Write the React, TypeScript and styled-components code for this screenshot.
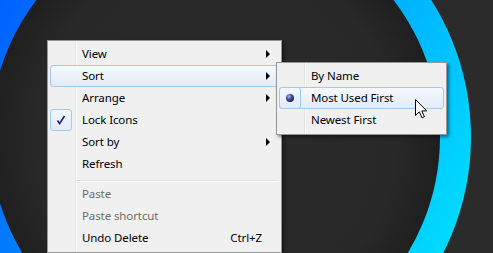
import styled, { createGlobalStyle } from "styled-components";

const GlobalStyle = createGlobalStyle`
  html, body {
    margin: 0;
    padding: 0;
    background: #2b2b2b;
  }
`;

type Entry =
  | { kind: "item"; label: string; arrow?: boolean; shortcut?: string; disabled?: boolean; active?: boolean; mark?: "check" | "radio" }
  | { kind: "sep" };

const mainEntries: Entry[] = [
  { kind: "item", label: "View", arrow: true },
  { kind: "item", label: "Sort", arrow: true, active: true },
  { kind: "item", label: "Arrange", arrow: true },
  { kind: "item", label: "Lock Icons", mark: "check" },
  { kind: "item", label: "Sort by", arrow: true },
  { kind: "item", label: "Refresh" },
  { kind: "sep" },
  { kind: "item", label: "Paste", disabled: true },
  { kind: "item", label: "Paste shortcut", disabled: true },
  { kind: "item", label: "Undo Delete", shortcut: "Ctrl+Z" },
];

const subEntries: Entry[] = [
  { kind: "item", label: "By Name" },
  { kind: "item", label: "Most Used First", active: true, mark: "radio" },
  { kind: "item", label: "Newest First" },
];

const Wallpaper = () => (
  <WallSvg width="493" height="253" viewBox="0 0 493 253">
    <defs>
      <linearGradient id="ring" gradientUnits="userSpaceOnUse" x1="0" y1="0" x2="493" y2="253">
        <stop offset="0" stopColor="#0062ff" />
        <stop offset="0.5" stopColor="#009cff" />
        <stop offset="1" stopColor="#00e6ff" />
      </linearGradient>
      <radialGradient id="hole" cx="215" cy="137" r="226" gradientUnits="userSpaceOnUse">
        <stop offset="0" stopColor="#2a2a2a" />
        <stop offset="0.8" stopColor="#282828" />
        <stop offset="1" stopColor="#1f1f1f" />
      </radialGradient>
    </defs>
    <circle cx="215" cy="137" r="256" fill="url(#ring)" />
    <circle cx="215" cy="137" r="225" fill="url(#hole)" />
  </WallSvg>
);

const Mark = ({ type }: { type: "check" | "radio" }) =>
  type === "check" ? (
    <svg width="20" height="20" viewBox="0 0 20 20">
      <path d="M6.5 10.5 L8.6 13.6 L13.5 6" fill="none" stroke="#1c1c80" strokeWidth="1.6" />
    </svg>
  ) : (
    <svg width="20" height="20" viewBox="0 0 20 20">
      <defs>
        <radialGradient id="dot" cx="0.38" cy="0.32" r="0.7">
          <stop offset="0" stopColor="#b9bdf0" />
          <stop offset="0.45" stopColor="#4d51a8" />
          <stop offset="1" stopColor="#1e1f5c" />
        </radialGradient>
      </defs>
      <circle cx="10" cy="10" r="4" fill="url(#dot)" />
    </svg>
  );

const MenuList = ({ entries }: { entries: Entry[] }) => (
  <>
    {entries.map((e, i) =>
      e.kind === "sep" ? (
        <Separator key={i} />
      ) : (
        <Item key={i} $active={!!e.active} $disabled={!!e.disabled}>
          <IconCell $boxed={!!e.mark}>{e.mark && <Mark type={e.mark} />}</IconCell>
          <Label>{e.label}</Label>
          {e.shortcut && <Shortcut>{e.shortcut}</Shortcut>}
          <ArrowCell>{e.arrow && <Arrow />}</ArrowCell>
        </Item>
      )
    )}
  </>
);

export default function App() {
  return (
    <>
      <GlobalStyle />
      <Desktop>
        <Wallpaper />
        <Menu $left={47} $top={40} $width={235}>
          <MenuList entries={mainEntries} />
        </Menu>
        <Menu $left={276} $top={62} $width={171}>
          <MenuList entries={subEntries} />
        </Menu>
        <Cursor width="13" height="20" viewBox="0 0 13 20">
          <path
            d="M0.5 0.5 L0.5 16.5 L4.3 12.8 L7 18.8 L9.4 17.8 L6.8 11.9 L11.7 11.9 Z"
            fill="#fff"
            stroke="#000"
            strokeWidth="1"
            strokeLinejoin="miter"
          />
        </Cursor>
      </Desktop>
    </>
  );
}

const Desktop = styled.div`
  position: relative;
  width: 493px;
  height: 253px;
  overflow: hidden;
  background: #2b2b2b;
  font-family: "Segoe UI", "Noto Sans", "Open Sans", sans-serif;
  font-size: 11.5px;
  letter-spacing: -0.1px;
  color: #000;
`;

const WallSvg = styled.svg`
  position: absolute;
  inset: 0;
  display: block;
`;

const Menu = styled.div<{ $left: number; $top: number; $width: number }>`
  position: absolute;
  left: ${(p) => p.$left}px;
  top: ${(p) => p.$top}px;
  width: ${(p) => p.$width}px;
  box-sizing: border-box;
  padding: 2px 2px 3px;
  border: 1px solid #979797;
  background:
    linear-gradient(
      to right,
      transparent 27px,
      #e2e3e3 27px,
      #e2e3e3 28px,
      #ffffff 28px,
      #ffffff 29px,
      transparent 29px
    ),
    #f0f0f0;
  box-shadow: 2px 2px 3px rgba(0, 0, 0, 0.45);
  display: flex;
  flex-direction: column;
`;

const Item = styled.div<{ $active: boolean; $disabled: boolean }>`
  height: 22px;
  box-sizing: border-box;
  display: flex;
  align-items: center;
  border: 1px solid ${(p) => (p.$active ? "#a8c8f0" : "transparent")};
  border-radius: 3px;
  background: ${(p) =>
    p.$active ? "linear-gradient(to bottom, #f6f9fe 0%, #eaf1fb 60%, #e1ebf9 100%)" : "transparent"};
  color: ${(p) => (p.$disabled ? "#6d6d6d" : "#000")};
  white-space: nowrap;
`;

const IconCell = styled.span<{ $boxed: boolean }>`
  width: 22px;
  height: 22px;
  margin: -1px 0 -1px -1px;
  box-sizing: border-box;
  display: flex;
  align-items: center;
  justify-content: center;
  border: 1px solid ${(p) => (p.$boxed ? "#a8c8f0" : "transparent")};
  border-radius: 3px;
  background: ${(p) => (p.$boxed ? "linear-gradient(to bottom, #f2f6fd, #e4ecf9)" : "transparent")};
`;

const Label = styled.span`
  flex: 1;
  margin-left: 10px;
  line-height: 20px;
`;

const Shortcut = styled.span`
  line-height: 20px;
`;

const ArrowCell = styled.span`
  width: 16px;
  height: 20px;
  display: flex;
  align-items: center;
`;

const Arrow = styled.span`
  margin-left: 4px;
  width: 0;
  height: 0;
  border-left: 4px solid #000;
  border-top: 4px solid transparent;
  border-bottom: 4px solid transparent;
`;

const Separator = styled.div`
  height: 2px;
  margin: 5px 0 1px 27px;
  box-sizing: border-box;
  border-top: 1px solid #e0e0e0;
  border-bottom: 1px solid #ffffff;
`;

const Cursor = styled.svg`
  position: absolute;
  left: 415px;
  top: 99px;
  display: block;
`;
